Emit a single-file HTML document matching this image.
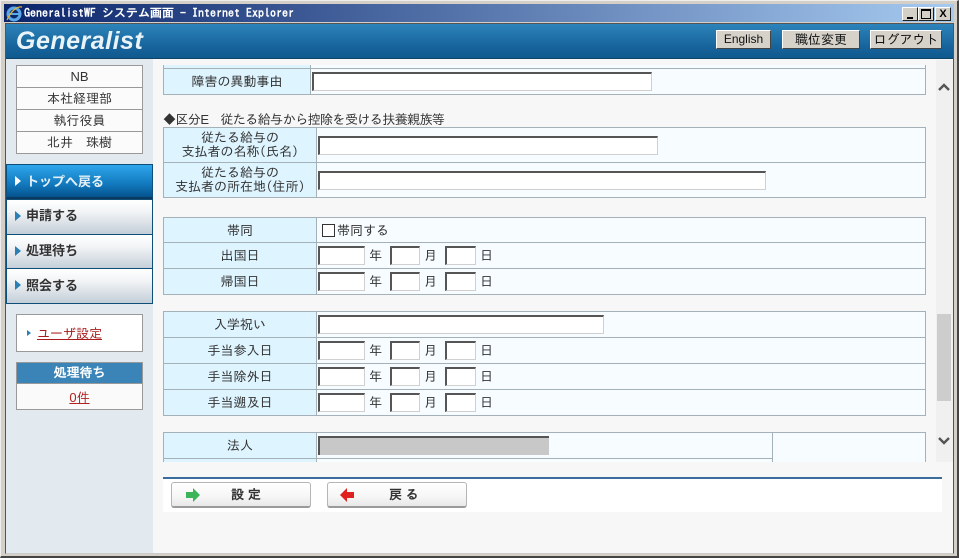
<!DOCTYPE html>
<html lang="ja"><head><meta charset="utf-8"><title>GeneralistWF</title>
<style>
html,body{margin:0;padding:0}
body{width:959px;height:558px;position:relative;overflow:hidden;background:#d4d0c8;font-family:"Liberation Sans","IPAGothic","Noto Sans CJK JP",sans-serif;font-size:13px;color:#222}
div,span,b{position:absolute;box-sizing:border-box;white-space:nowrap}
em{font-style:normal;font-family:"Liberation Sans",sans-serif}
.l{background:#def4ff;border:1px solid #a5b1b9;text-align:center;font-family:"IPAGothic","Noto Sans CJK JP",sans-serif;font-size:13px;color:#333}
.v{background:#f6fcff;border:1px solid #a5b1b9}
.i{background:#fff;border:1px solid #d0d0d0;border-top:2px solid #555;border-left:2px solid #555;height:19px}
.t{font-family:"IPAGothic","Noto Sans CJK JP",sans-serif;font-size:13px;color:#333}
.m{left:6px;width:147px;height:36px;border:1px solid #0e4e78;background:linear-gradient(#fff,#f2f4f6 35%,#c3ced8);font-family:"Noto Sans CJK JP",sans-serif;font-weight:700;font-size:13px;color:#333;line-height:29px;padding-left:19px}
.m:before{content:"";position:absolute;left:8px;top:11px;border-left:6px solid #2a7fb5;border-top:5px solid transparent;border-bottom:5px solid transparent}
.m.on:before{border-left-color:#fff}
.s{left:16px;width:127px;height:23px;background:#fbfbfb;border:1px solid #999;text-align:center;font-family:"IPAGothic","Noto Sans CJK JP",sans-serif;font-size:13px;color:#333;line-height:21px}
.h{top:30px;height:19px;background:#d6d2ca;border:1px solid;border-color:#fff #444 #444 #fff;text-align:center;font-family:"IPAGothic","Noto Sans CJK JP",sans-serif;font-size:13px;line-height:17px;color:#111}
.w{top:7px;width:16px;height:14px;background:#d4d0c8;border:1px solid;border-color:#fff #222 #222 #fff}
.b{top:482px;width:140px;height:26px;border:1px solid #b5b5b5;border-bottom:2px solid #9a9a9a;border-radius:3px;background:linear-gradient(#fff,#f6f6f6 60%,#e8e8e8);font-family:"IPAGothic","Noto Sans CJK JP",sans-serif;font-size:13px;font-weight:700;color:#333;line-height:24px}
</style></head><body>
<div style="left:0;top:0;width:959px;height:558px;background:#d4d0c8;border:1px solid #eee;border-right:2px solid #444;border-bottom:2px solid #444"></div>
<div style="left:4px;top:4px;width:950px;height:18px;background:linear-gradient(90deg,#0a246a,#a6caf0)"></div>
<svg style="position:absolute;left:5px;top:5px" width="18" height="17" viewBox="0 0 18 17"><ellipse cx="9" cy="9" rx="6" ry="6" fill="none" stroke="#5aa8e8" stroke-width="3"/><path d="M4 9H14" stroke="#5aa8e8" stroke-width="2"/><path d="M2 15C6 6 12 1 17 2" fill="none" stroke="#e8b030" stroke-width="1.2"/></svg>
<div style="left:24px;top:5px;font:bold 12px/16px 'IPAGothic','Noto Sans CJK JP',monospace;color:#fff;letter-spacing:0">GeneralistWF システム画面 - Internet Explorer</div>
<div class="w" style="left:902px"><b style="left:4px;top:9px;width:6px;height:2px;background:#000"></b></div>
<div class="w" style="left:918px"><b style="left:2px;top:1px;width:10px;height:10px;border:1px solid #000;border-top:2px solid #000"></b></div>
<div class="w" style="left:935px;font:bold 11px/12px 'Liberation Sans';text-align:center;color:#000">X</div>

<div style="left:5px;top:23px;width:949px;height:531px;background:#f7f7f7;border:1px solid #555;border-bottom:1px solid #ccc"></div>
<div style="left:6px;top:24px;width:947px;height:35px;background:linear-gradient(#2c84ba,#16629a 70%,#0f5a8e);border-bottom:1px solid #0f4468"></div>
<div style="left:16px;top:26px;font:italic bold 25px/31px 'Liberation Sans',sans-serif;color:#e9f3f8;letter-spacing:.5px">Generalist</div>
<div class="h" style="left:716px;width:55px;font-family:'Liberation Sans',sans-serif;font-size:12px">English</div>
<div class="h" style="left:782px;width:78px">職位変更</div>
<div class="h" style="left:870px;width:72px">ログアウト</div>

<div style="left:6px;top:59px;width:147px;height:494px;background:#e2e9ef"></div>
<div class="s" style="top:65px"><em>NB</em></div>
<div class="s" style="top:87px">本社経理部</div>
<div class="s" style="top:109px">執行役員</div>
<div class="s" style="top:131px">北井　珠樹</div>

<div class="m" style="top:199px">申請する</div>
<div class="m" style="top:234px">処理待ち</div>
<div class="m" style="top:268px;height:36px;line-height:31px">照会する</div>
<div class="m on" style="top:164px;height:35px;line-height:31px;background:linear-gradient(#2ea6ec,#1279bd 60%,#05528e);color:#e4f0f8;border-bottom:2px solid #0a3a60">トップへ戻る</div>

<div style="left:16px;top:314px;width:127px;height:38px;background:#fff;border:1px solid #999"></div>
<div style="left:27px;top:330px;border-left:4px solid #2a7fb5;border-top:3px solid transparent;border-bottom:3px solid transparent"></div>
<div class="t" style="left:37px;top:325px;color:#a81c1c;text-decoration:underline;line-height:17px">ユーザ設定</div>
<div style="left:16px;top:362px;width:127px;height:48px;background:#fafafa;border:1px solid #999"></div>
<div style="left:17px;top:363px;width:125px;height:21px;background:#3a84b8;border-bottom:1px solid #999;color:#fff;text-align:center;font:bold 13px/20px 'IPAGothic','Noto Sans CJK JP',sans-serif">処理待ち</div>
<div class="t" style="left:17px;top:389px;width:125px;text-align:center;color:#b02020;text-decoration:underline;line-height:17px"><em>0</em>件</div>

<!-- content -->
<div class="l" style="left:163px;top:65px;width:148px;height:3px;border-bottom:0;border-top:0"></div>
<div class="v" style="left:310px;top:65px;width:616px;height:3px;border-bottom:0;border-top:0"></div>
<div class="l" style="left:163px;top:68px;width:148px;height:27px;line-height:26px">障害の異動事由</div>
<div class="v" style="left:310px;top:68px;width:616px;height:27px"></div>
<div class="i" style="left:312px;top:72px;width:340px"></div>

<div class="t" style="left:163px;top:112px;line-height:15px;letter-spacing:-.55px">◆区分<em>E</em>&nbsp; 従たる給与から控除を受ける扶養親族等</div>
<div class="l" style="left:163px;top:127px;width:154px;height:36px;line-height:14px;padding-top:3px">従たる給与の<br>支払者の名称(氏名)</div>
<div class="v" style="left:316px;top:127px;width:610px;height:36px"></div>
<div class="i" style="left:318px;top:136px;width:340px"></div>
<div class="l" style="left:163px;top:162px;width:154px;height:36px;line-height:14px;padding-top:3px">従たる給与の<br>支払者の所在地(住所)</div>
<div class="v" style="left:316px;top:162px;width:610px;height:36px"></div>
<div class="i" style="left:318px;top:171px;width:448px"></div>

<div class="l" style="left:163px;top:217px;width:154px;height:26px;line-height:26px">帯同</div>
<div class="v" style="left:316px;top:217px;width:610px;height:26px"></div>
<div style="left:322px;top:224px;width:13px;height:13px;background:#fff;border:1px solid #333"></div>
<div class="t" style="left:337px;top:223px;line-height:15px">帯同する</div>
<div class="l" style="left:163px;top:242px;width:154px;height:27px;line-height:26px">出国日</div>
<div class="v" style="left:316px;top:242px;width:610px;height:27px"></div>
<div class="i" style="left:318px;top:246px;width:47px"></div><div class="t" style="left:369px;top:249px">年</div>
<div class="i" style="left:390px;top:246px;width:30px"></div><div class="t" style="left:424px;top:249px">月</div>
<div class="i" style="left:445px;top:246px;width:31px"></div><div class="t" style="left:480px;top:249px">日</div>
<div class="l" style="left:163px;top:268px;width:154px;height:27px;line-height:26px">帰国日</div>
<div class="v" style="left:316px;top:268px;width:610px;height:27px"></div>
<div class="i" style="left:318px;top:272px;width:47px"></div><div class="t" style="left:369px;top:275px">年</div>
<div class="i" style="left:390px;top:272px;width:30px"></div><div class="t" style="left:424px;top:275px">月</div>
<div class="i" style="left:445px;top:272px;width:31px"></div><div class="t" style="left:480px;top:275px">日</div>

<div class="l" style="left:163px;top:311px;width:154px;height:27px;line-height:26px">入学祝い</div>
<div class="v" style="left:316px;top:311px;width:610px;height:27px"></div>
<div class="i" style="left:318px;top:315px;width:286px"></div>
<div class="l" style="left:163px;top:337px;width:154px;height:27px;line-height:26px">手当参入日</div>
<div class="v" style="left:316px;top:337px;width:610px;height:27px"></div>
<div class="i" style="left:318px;top:341px;width:47px"></div><div class="t" style="left:369px;top:344px">年</div>
<div class="i" style="left:390px;top:341px;width:30px"></div><div class="t" style="left:424px;top:344px">月</div>
<div class="i" style="left:445px;top:341px;width:31px"></div><div class="t" style="left:480px;top:344px">日</div>
<div class="l" style="left:163px;top:363px;width:154px;height:27px;line-height:26px">手当除外日</div>
<div class="v" style="left:316px;top:363px;width:610px;height:27px"></div>
<div class="i" style="left:318px;top:367px;width:47px"></div><div class="t" style="left:369px;top:370px">年</div>
<div class="i" style="left:390px;top:367px;width:30px"></div><div class="t" style="left:424px;top:370px">月</div>
<div class="i" style="left:445px;top:367px;width:31px"></div><div class="t" style="left:480px;top:370px">日</div>
<div class="l" style="left:163px;top:389px;width:154px;height:27px;line-height:26px">手当遡及日</div>
<div class="v" style="left:316px;top:389px;width:610px;height:27px"></div>
<div class="i" style="left:318px;top:393px;width:47px"></div><div class="t" style="left:369px;top:396px">年</div>
<div class="i" style="left:390px;top:393px;width:30px"></div><div class="t" style="left:424px;top:396px">月</div>
<div class="i" style="left:445px;top:393px;width:31px"></div><div class="t" style="left:480px;top:396px">日</div>

<div class="l" style="left:163px;top:432px;width:154px;height:27px;line-height:26px">法人</div>
<div class="v" style="left:316px;top:432px;width:457px;height:27px"></div>
<div class="i" style="left:318px;top:436px;width:231px;background:#c8c8c8;border-right:0;border-bottom:0"></div>
<div class="v" style="left:772px;top:432px;width:154px;height:40px"></div>
<div class="l" style="left:163px;top:458px;width:154px;height:14px"></div>
<div class="v" style="left:316px;top:458px;width:457px;height:14px"></div>
<div style="left:153px;top:462px;width:800px;height:15px;background:#f7f7f7"></div>

<!-- scrollbar -->
<div style="left:936px;top:60px;width:17px;height:402px;background:#f0f0f0"></div>
<div style="left:937px;top:314px;width:14px;height:87px;background:#cdcdcd"></div>
<svg style="position:absolute;left:936px;top:80px" width="16" height="14" viewBox="0 0 16 14"><path d="M3 10L8 5L13 10" fill="none" stroke="#555" stroke-width="2.4"/></svg>
<svg style="position:absolute;left:936px;top:434px" width="16" height="14" viewBox="0 0 16 14"><path d="M3 4L8 9L13 4" fill="none" stroke="#555" stroke-width="2.4"/></svg>

<!-- footer -->
<div style="left:163px;top:477px;width:779px;height:35px;background:#fff;border-top:2px solid #3a6c9e"></div>
<div class="b" style="left:171px"><span style="left:59px;top:0">設<em> </em>定</span>
<svg style="position:absolute;left:13px;top:5px" width="16" height="14" viewBox="0 0 16 14"><path d="M1 4H8V0L15 7L8 14V10H1Z" fill="#3cb55a"/></svg></div>
<div class="b" style="left:327px"><span style="left:61px;top:0">戻<em> </em>る</span>
<svg style="position:absolute;left:11px;top:5px" width="16" height="14" viewBox="0 0 16 14"><path d="M15 4H8V0L1 7L8 14V10H15Z" fill="#e02020"/></svg></div>
</body></html>
